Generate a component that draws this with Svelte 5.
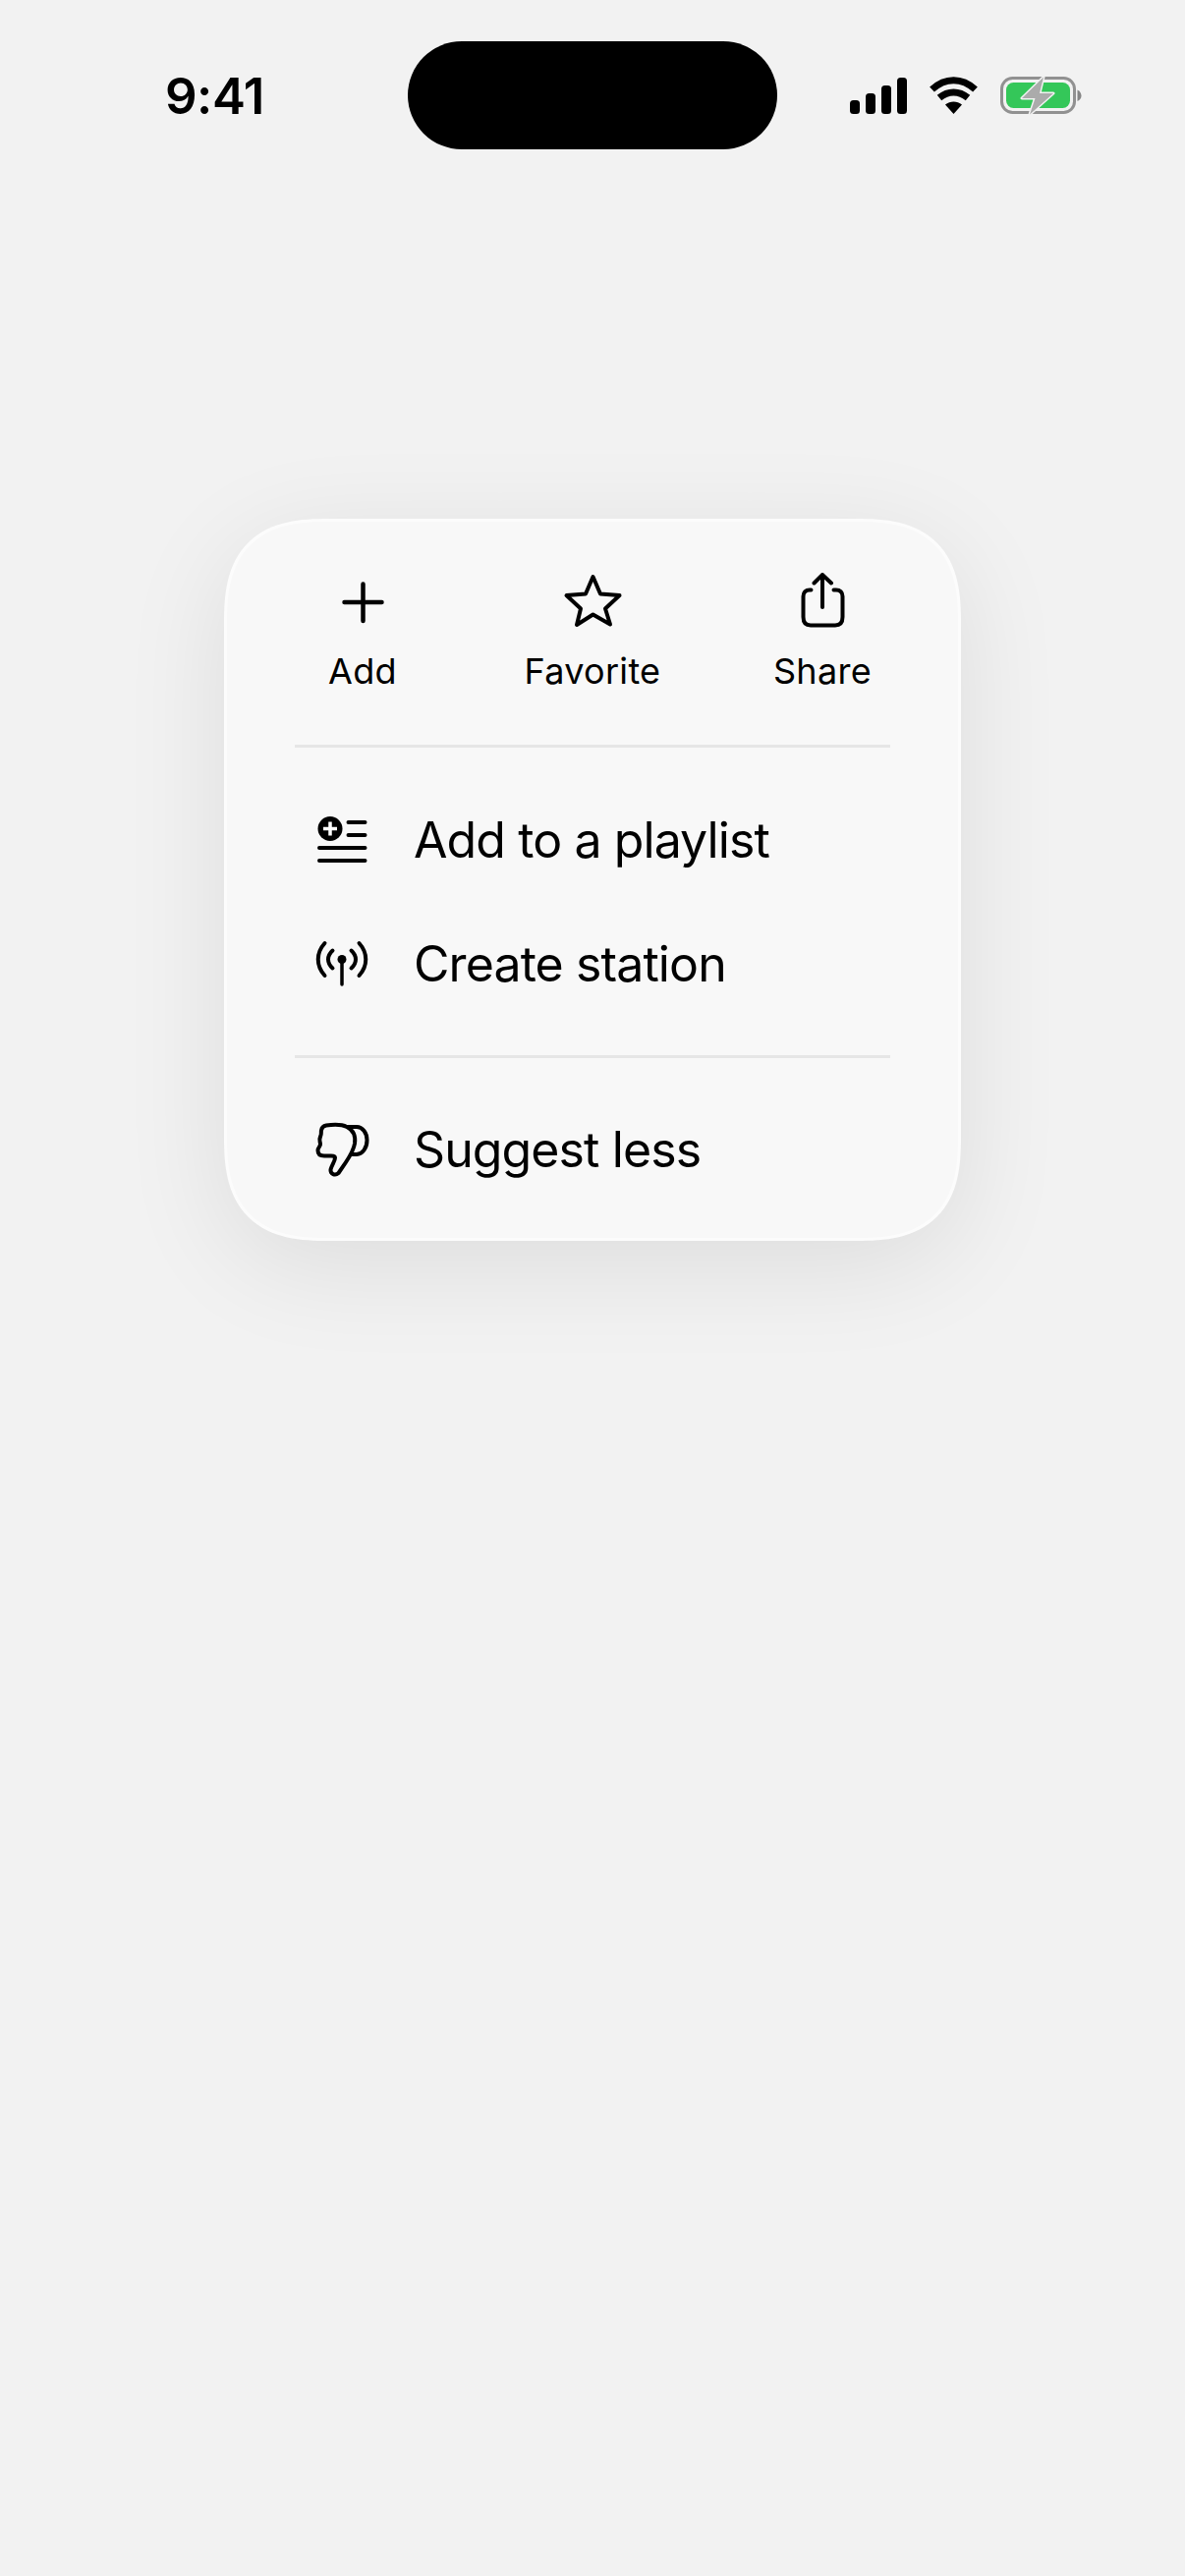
<script>
  const actions = [
    { label: 'Add', kind: 'add' },
    { label: 'Favorite', kind: 'star' },
    { label: 'Share', kind: 'share' }
  ];
</script>

<div class="screen">
  <header class="status">
    <span class="time">9:41</span>
    <div class="island"></div>
    <div class="indicators">
      <svg class="signal" viewBox="865 78 58 38" width="58" height="38" aria-hidden="true">
        <rect x="865" y="102" width="10" height="14" rx="3.5" />
        <rect x="881" y="95" width="10" height="21" rx="3.5" />
        <rect x="897" y="87" width="10" height="29" rx="3.5" />
        <rect x="913" y="79" width="10" height="37" rx="3.5" />
      </svg>
      <svg class="wifi" viewBox="945 78 52 38" width="52" height="38" aria-hidden="true">
        <path d="M948.5 91C962 78.500 979 78.500 992.5 91" fill="none" stroke="#000" stroke-width="7" />
        <path d="M956 99.500C965 92 976 92 985 99.500" fill="none" stroke="#000" stroke-width="7" />
        <path d="M962 106.500C967 102.500 974 102.500 979 106.500L970.500 116Z" fill="#000" />
      </svg>
      <svg class="battery" viewBox="1017 76 84 42" width="84" height="42" aria-hidden="true">
        <rect x="1019.5" y="79.5" width="74" height="35" rx="11" fill="none" stroke="#919191" stroke-width="3" />
        <rect x="1024" y="84" width="65" height="26" rx="7.5" fill="#34c759" />
        <path d="M1096.5 91.5C1099 92.5 1100.5 95 1100.5 97.5C1100.5 100 1099 102 1096.5 103Z" fill="#858585" />
        <path d="M1062 78.500L1040 100H1053.500L1048 116.500L1072 95H1058Z" fill="#ababab" stroke="#f2f2f2" stroke-width="3" stroke-linejoin="round" paint-order="stroke" />
      </svg>
    </div>
  </header>

  <section class="card">
    <div class="actions">
      {#each actions as a}
        <div class="action">
          {#if a.kind === 'add'}
            <svg viewBox="338 583 60 60" width="60" height="60" aria-hidden="true">
              <path d="M368.5 594.5V632M349.5 613H387.5" class="line" stroke-width="4.5" />
            </svg>
          {:else if a.kind === 'star'}
            <svg viewBox="572 583 60 60" width="60" height="60" aria-hidden="true">
              <path d="M602.5 587L610 604.5L629.5 606L615 619.500L620 635.500L602.5 625.500L586 636L590 619.500L575.500 606L595 604.500Z" class="line" stroke-width="4" stroke-linejoin="round" />
            </svg>
          {:else}
            <svg viewBox="807 583 60 60" width="60" height="60" aria-hidden="true">
              <path d="M825.500 600.500H824C820 600.500 817.500 603 817.500 607V628C817.500 633.500 820 636.500 825 636.500H850C855 636.500 857.500 633.500 857.500 628V607C857.500 603 855 600.500 851 600.500H848.500" class="line" stroke-width="4" />
              <path d="M837 618V585.500M828.500 593.500L837 585L846 593.500" class="line" stroke-width="4" />
            </svg>
          {/if}
          <span class="label">{a.label}</span>
        </div>
      {/each}
    </div>

    <div class="divider"></div>

    <div class="group">
      <div class="row">
        <svg viewBox="318 825 60 60" width="60" height="60" aria-hidden="true">
          <circle cx="336" cy="843.500" r="12.500" fill="#000" />
          <path d="M336 836.500V850.500M329 843.500H343" class="line white" stroke-width="3.500" />
          <path d="M354.500 837H371.500M354.500 850H371.500M325 863H371.500M325 876H371.500" class="line" stroke-width="4" />
        </svg>
        <span>Add to a playlist</span>
      </div>
      <div class="row">
        <svg viewBox="318 951 60 60" width="60" height="60" aria-hidden="true">
          <path d="M330.500 960C321.500 970 321.500 983 330.500 993M338.500 967.500C332.500 973 332.500 980 338.500 985.500M365.500 960C374.500 970 374.500 983 365.500 993M357.500 967.500C363.500 973 363.500 980 357.500 985.500" class="line" stroke-width="4" />
          <circle cx="348" cy="976.500" r="4.500" fill="#000" />
          <path d="M348 977V1002" class="line" stroke-width="3.500" />
        </svg>
        <span>Create station</span>
      </div>
    </div>

    <div class="divider"></div>

    <div class="group last">
      <div class="row">
        <svg viewBox="318 1140 60 60" width="60" height="60" aria-hidden="true">
          <path d="M332 1145.500C339 1144.500 348 1144.500 353 1147C360 1150.500 362 1157 361 1164C360 1170 356 1177 352 1183L344.500 1194C341 1197 336 1195 336.500 1190.500C337.500 1186 341 1182 341 1178.500C341 1176.500 339.500 1176.500 337 1176.500H330C326.500 1176.500 323.500 1175 323.500 1171C323.500 1167.500 326.500 1167 326 1164C325.500 1161.500 324.500 1160 326 1157C327.500 1154 326.500 1153 327 1150.500C327.500 1147.500 329 1146 332 1145.500Z" class="line" stroke-width="4" stroke-linejoin="round" />
          <path d="M354 1147H363C369 1147 373.500 1153 373.500 1160.500C373.500 1168.500 369 1174.500 363 1175H358.500" class="line" stroke-width="4" />
        </svg>
        <span>Suggest less</span>
      </div>
    </div>
  </section>
</div>

<style>
  :global(body) {
    margin: 0;
    background: #f2f2f2;
  }

  .screen {
    width: 1206px;
    height: 2622px;
    background: #f2f2f2;
    color: #000;
    font-family: Inter, "Noto Sans", sans-serif;
    overflow: hidden;
  }

  .status {
    display: flex;
    align-items: center;
    height: 110px;
    padding: 42px 0 0 168px;
  }

  .time {
    width: 247px;
    padding-top: 2px;
    font-size: 51px;
    font-weight: 600;
    line-height: 108px;
    letter-spacing: -0.5px;
  }

  .island {
    width: 376px;
    height: 110px;
    border-radius: 55px;
    background: #000;
  }

  .indicators {
    display: flex;
    align-items: center;
    margin-left: 74px;
    gap: 22px;
  }

  .indicators svg {
    display: block;
    flex: none;
  }

  .signal {
    fill: #000;
  }

  .battery {
    margin-left: -2px;
  }

  .card {
    width: 750px;
    height: 735px;
    box-sizing: border-box;
    margin: 376px auto 0;
    padding: 52px 69px 0;
    background: #f8f8f8;
    border: 3px solid #fcfcfc;
    border-radius: 92px;
    box-shadow: 0 24px 110px rgba(0, 0, 0, 0.09);
  }

  @supports (corner-shape: superellipse(1.4)) {
    .card {
      border-radius: 106px;
      corner-shape: superellipse(1.4);
    }
  }

  .actions {
    display: grid;
    grid-template-columns: repeat(3, 234px);
    justify-content: center;
    margin: 0 -69px;
  }

  .action {
    display: flex;
    flex-direction: column;
    align-items: center;
  }

  .action svg {
    display: block;
  }

  .label {
    margin-top: 18px;
    font-size: 36px;
    font-weight: 400;
    line-height: 44px;
    letter-spacing: 0.3px;
  }

  .divider {
    height: 3px;
    background: #e6e6e6;
  }

  .actions + .divider {
    margin-top: 53px;
  }

  .group {
    padding: 31px 0 30px;
  }

  .last {
    padding-top: 30px;
  }

  .row {
    display: flex;
    align-items: center;
    height: 126px;
    gap: 43px;
    padding-left: 18px;
    font-size: 50px;
    line-height: 60px;
    letter-spacing: -0.9px;
  }

  .row svg {
    display: block;
    flex: none;
  }

  .line {
    fill: none;
    stroke: #000;
    stroke-linecap: round;
  }

  .white {
    stroke: #fff;
    stroke-linecap: butt;
  }
</style>
